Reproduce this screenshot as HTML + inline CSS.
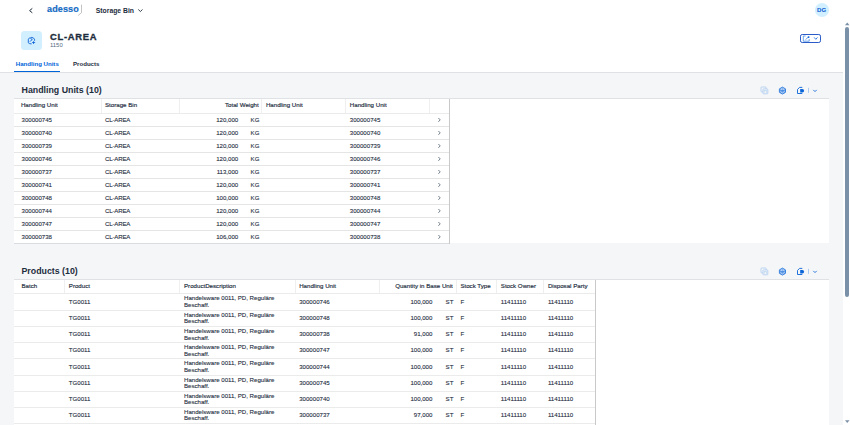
<!DOCTYPE html>
<html><head><meta charset="utf-8"><style>
*{margin:0;padding:0;box-sizing:border-box}
html,body{width:850px;height:425px;overflow:hidden;background:#f5f6f7;font-family:"Liberation Sans",sans-serif;color:#1d2d3e}
.a{position:absolute;white-space:nowrap}
#hdr{position:absolute;left:0;top:0;width:843px;height:73px;background:#fff;border-bottom:1px solid #dfe1e4}
#sb{position:absolute;left:843px;top:0;width:7px;height:425px;background:#fff}
.thumb{position:absolute;left:845px;width:4px;background:#7b91a8;border-radius:2px}
.tbl{position:absolute;left:14px;width:815px;background:#fff}
.th{font-weight:normal;font-size:6.15px;color:#1d2d3e;-webkit-text-stroke:0.16px #1d2d3e}
.td{font-size:6.1px;color:#1d2d3e;-webkit-text-stroke:0.1px #1d2d3e}
.hl{position:absolute;height:1px;background:#ebebeb}
.vl{position:absolute;width:1px;background:#efefef}
.ttl{font-weight:bold;font-size:8.8px;color:#1d2d3e}
</style></head><body>
<div id="hdr"></div>
<svg class="a" style="left:27px;top:7px" width="8" height="8" viewBox="27 7 8 8"><path d="M32.3 8.4 L29.6 10.6 L32.3 12.8" fill="none" stroke="#1d2d3e" stroke-width="1"/></svg>
<div class="a " style="left:47.0px;top:3.5px;font-weight:bold;font-size:9px;color:#156cc4;letter-spacing:0.15px;-webkit-text-stroke:0.2px #156cc4">adesso</div>
<svg class="a" style="left:77px;top:4px" width="6" height="12" viewBox="0 0 6 12"><path d="M4.5 0.6 L4.5 8.7 L1.2 11.5" fill="none" stroke="#9a9a9a" stroke-width="0.6"/></svg>
<div class="a " style="left:95.8px;top:7.2px;font-weight:bold;font-size:6.8px;color:#1d2d3e">Storage Bin</div>
<svg class="a" style="left:137px;top:8px" width="7" height="5" viewBox="137 8 7 5"><path d="M138.3 9.5 L140.4 11.5 L142.5 9.5" fill="none" stroke="#1d2d3e" stroke-width="0.9"/></svg>
<div class="a" style="left:814.7px;top:3.2px;width:14px;height:13.6px;border-radius:50%;background:#d1efff"></div>
<div class="a " style="left:816.9px;top:6.4px;font-weight:bold;font-size:6.1px;letter-spacing:0.15px;color:#0a58d0">DG</div>
<div class="a" style="left:21px;top:31px;width:21px;height:19px;border-radius:3.5px;background:#d1efff"></div>
<svg class="a" style="left:26px;top:35px" width="12" height="11" viewBox="26 35 12 11"><path d="M30.6 37.8 L29.2 38.2 Q28.3 38.6 28.3 39.6 L28.3 42.4 Q28.4 43.4 29.6 43.6 L31.6 43.9" fill="none" stroke="#0a5fd6" stroke-width="0.9"/><path d="M30.2 38.4 L31.8 37.3 L33.8 38.3 Q34.6 38.8 34.6 39.8 L34.6 40.8" fill="none" stroke="#0a5fd6" stroke-width="0.9"/><path d="M29.6 41.6 L32.6 39.6 M31.6 38.3 L31.6 40" fill="none" stroke="#0a5fd6" stroke-width="0.7"/><path d="M33.6 40.9 Q33.9 42.3 35.6 42.6 Q33.9 42.9 33.6 44.3 Q33.3 42.9 31.6 42.6 Q33.3 42.3 33.6 40.9 Z" fill="#0a5fd6"/></svg>
<div class="a " style="left:50.0px;top:31.2px;font-weight:bold;font-size:9.4px;letter-spacing:0.72px;color:#1d2d3e;-webkit-text-stroke:0.35px #1d2d3e">CL-AREA</div>
<div class="a " style="left:50px;top:42.3px;font-size:5.9px;color:#556b82">1150</div>
<div class="a" style="left:800.1px;top:33.8px;width:20.9px;height:9.1px;border:0.9px solid #2a5bc7;border-radius:2.2px;background:#fff"></div>
<svg class="a" style="left:802px;top:34.5px" width="9" height="7" viewBox="802 34.5 9 7"><path d="M805.6 35.5 L803.3 35.5 L803.3 40.7 L809.2 40.7 L809.2 38.6" fill="none" stroke="#3b86e6" stroke-width="0.75"/><path d="M805.4 39.3 L808.3 36.6" stroke="#3b86e6" stroke-width="0.75"/><circle cx="808.6" cy="36.6" r="0.95" fill="#0a5fd6"/></svg>
<svg class="a" style="left:813px;top:36px" width="6" height="5" viewBox="813 36 6 5"><path d="M814.1 37.4 L815.8 39.3 L817.5 37.4" fill="none" stroke="#2f78de" stroke-width="0.95"/></svg>
<div class="a " style="left:15.8px;top:59.7px;font-weight:bold;font-size:6.1px;color:#0064d9">Handling Units</div>
<div class="a " style="left:73px;top:59.7px;font-weight:bold;font-size:6.1px;color:#1d2d3e">Products</div>
<div class="a" style="left:14px;top:70.8px;width:46px;height:1.2px;background:#0064d9"></div>
<div id="sb"></div>
<svg class="a" style="left:844.5px;top:22px" width="5" height="3.5" viewBox="0 0 5 3.5"><path d="M0 3.2 L2.25 0.4 L4.5 3.2 Z" fill="#7b91a8"/></svg>
<div class="thumb" style="top:27.4px;height:270px"></div>
<svg class="a" style="left:844.5px;top:420px" width="5" height="3.5" viewBox="0 0 5 3.5"><path d="M0 0.3 L2.25 3.1 L4.5 0.3 Z" fill="#7b91a8"/></svg>
<div class="a ttl" style="left:21.6px;top:84.6px;">Handling Units (10)</div>
<svg class="a" style="left:758px;top:84.0px" width="32" height="12" viewBox="758 84 32 12"><path d="M766.1 88.7 L766.1 87.6 Q766.1 87 765.5 87 L761.6 87 Q761 87 761 87.6 L761 91.3 Q761 91.9 761.6 91.9 L762.7 91.9" fill="none" stroke="#9cc2f0" stroke-width="0.65"/><rect x="762.9" y="88.9" width="4.9" height="4.9" rx="0.7" fill="#f5f6f7" stroke="#9cc2f0" stroke-width="0.65"/><path d="M764.2 92.8 L764.2 90.4 L766.4 90.4 L766.4 92.8" fill="none" stroke="#a6c9f2" stroke-width="0.6"/><path d="M782.45 87.1 L785.5 88.85 L785.5 92.35 L782.45 94.1 L779.4 92.35 L779.4 88.85 Z" fill="#d4e5fb" stroke="#0a64d8" stroke-width="0.75"/><path d="M779.9 89.6 L785 92.6 M785 89.6 L779.9 92.6 M782.45 87.5 L782.45 93.7 M780.9 88 L780.9 93.1 M784 88 L784 93.1 M779.6 90.6 L785.3 90.6" stroke="#1a6fdc" stroke-width="0.42"/></svg>
<svg class="a" style="left:795px;top:84.0px" width="28" height="12" viewBox="795 84 28 12"><path d="M802.3 87.4 L799.6 87.4 L797.5 89.4 L797.5 93.5 L802.3 93.5" fill="none" stroke="#0a64d8" stroke-width="0.9"/><path d="M800.2 88.9 L802.4 88.9 Q804.1 88.9 804.1 90.7 Q804.1 92.5 802.4 92.5 L800.2 92.5 Z" fill="#0a64d8"/><rect x="808.05" y="87.8" width="0.55" height="5.1" fill="#6ea6ec"/><path d="M813.3 89.9 L815 91.6 L816.7 89.9" fill="none" stroke="#0a64d8" stroke-width="0.85"/></svg>
<div class="tbl" style="top:98.2px;height:145.1px;border-top:1px solid #dfe1e4;"></div>
<div class="hl" style="left:14px;top:112.8px;width:435.4px"></div>
<div class="hl" style="left:14px;top:125.8px;width:435.4px;background:#e5e5e5"></div>
<div class="hl" style="left:14px;top:138.8px;width:435.4px;background:#e5e5e5"></div>
<div class="hl" style="left:14px;top:151.8px;width:435.4px;background:#e5e5e5"></div>
<div class="hl" style="left:14px;top:164.8px;width:435.4px;background:#e5e5e5"></div>
<div class="hl" style="left:14px;top:177.8px;width:435.4px;background:#e5e5e5"></div>
<div class="hl" style="left:14px;top:190.8px;width:435.4px;background:#e5e5e5"></div>
<div class="hl" style="left:14px;top:203.8px;width:435.4px;background:#e5e5e5"></div>
<div class="hl" style="left:14px;top:216.8px;width:435.4px;background:#e5e5e5"></div>
<div class="hl" style="left:14px;top:229.8px;width:435.4px;background:#e5e5e5"></div>
<div class="hl" style="left:14px;top:242.8px;width:435.4px;background:#d9dde2"></div>
<div class="vl" style="left:100.9px;top:99.2px;height:14.1px"></div>
<div class="vl" style="left:179.1px;top:99.2px;height:14.1px"></div>
<div class="vl" style="left:260.7px;top:99.2px;height:14.1px"></div>
<div class="vl" style="left:345.1px;top:99.2px;height:14.1px"></div>
<div class="vl" style="left:428.9px;top:99.2px;height:14.1px"></div>
<div class="vl" style="left:448.9px;top:99.2px;height:145.1px;background:#c9c9c9"></div>
<div class="a th" style="left:20.9px;top:101.3px;">Handling Unit</div>
<div class="a th" style="left:105px;top:101.3px;">Storage Bin</div>
<div class="a th" style="right:591.3px;top:101.3px">Total Weight</div>
<div class="a th" style="left:265.9px;top:101.3px;">Handling Unit</div>
<div class="a th" style="left:349.8px;top:101.3px;">Handling Unit</div>
<div class="a td" style="left:21.5px;top:116.2px;">300000745</div>
<div class="a td" style="left:105px;top:116.2px;letter-spacing:-0.17px">CL-AREA</div>
<div class="a td" style="right:611.8px;top:116.2px">120,000</div>
<div class="a td" style="left:250.6px;top:116.2px;">KG</div>
<div class="a td" style="left:349.8px;top:116.2px;">300000745</div>
<svg class="a" style="left:437px;top:117.40px" width="5" height="6" viewBox="0 0 5 6"><path d="M1.4 1.0 L3.2 2.9 L1.4 4.8" fill="none" stroke="#33475b" stroke-width="0.7"/></svg>
<div class="a td" style="left:21.5px;top:129.2px;">300000740</div>
<div class="a td" style="left:105px;top:129.2px;letter-spacing:-0.17px">CL-AREA</div>
<div class="a td" style="right:611.8px;top:129.2px">120,000</div>
<div class="a td" style="left:250.6px;top:129.2px;">KG</div>
<div class="a td" style="left:349.8px;top:129.2px;">300000740</div>
<svg class="a" style="left:437px;top:130.40px" width="5" height="6" viewBox="0 0 5 6"><path d="M1.4 1.0 L3.2 2.9 L1.4 4.8" fill="none" stroke="#33475b" stroke-width="0.7"/></svg>
<div class="a td" style="left:21.5px;top:142.20000000000002px;">300000739</div>
<div class="a td" style="left:105px;top:142.20000000000002px;letter-spacing:-0.17px">CL-AREA</div>
<div class="a td" style="right:611.8px;top:142.20000000000002px">120,000</div>
<div class="a td" style="left:250.6px;top:142.20000000000002px;">KG</div>
<div class="a td" style="left:349.8px;top:142.20000000000002px;">300000739</div>
<svg class="a" style="left:437px;top:143.40px" width="5" height="6" viewBox="0 0 5 6"><path d="M1.4 1.0 L3.2 2.9 L1.4 4.8" fill="none" stroke="#33475b" stroke-width="0.7"/></svg>
<div class="a td" style="left:21.5px;top:155.20000000000002px;">300000746</div>
<div class="a td" style="left:105px;top:155.20000000000002px;letter-spacing:-0.17px">CL-AREA</div>
<div class="a td" style="right:611.8px;top:155.20000000000002px">120,000</div>
<div class="a td" style="left:250.6px;top:155.20000000000002px;">KG</div>
<div class="a td" style="left:349.8px;top:155.20000000000002px;">300000746</div>
<svg class="a" style="left:437px;top:156.40px" width="5" height="6" viewBox="0 0 5 6"><path d="M1.4 1.0 L3.2 2.9 L1.4 4.8" fill="none" stroke="#33475b" stroke-width="0.7"/></svg>
<div class="a td" style="left:21.5px;top:168.20000000000002px;">300000737</div>
<div class="a td" style="left:105px;top:168.20000000000002px;letter-spacing:-0.17px">CL-AREA</div>
<div class="a td" style="right:611.8px;top:168.20000000000002px">113,000</div>
<div class="a td" style="left:250.6px;top:168.20000000000002px;">KG</div>
<div class="a td" style="left:349.8px;top:168.20000000000002px;">300000737</div>
<svg class="a" style="left:437px;top:169.40px" width="5" height="6" viewBox="0 0 5 6"><path d="M1.4 1.0 L3.2 2.9 L1.4 4.8" fill="none" stroke="#33475b" stroke-width="0.7"/></svg>
<div class="a td" style="left:21.5px;top:181.20000000000002px;">300000741</div>
<div class="a td" style="left:105px;top:181.20000000000002px;letter-spacing:-0.17px">CL-AREA</div>
<div class="a td" style="right:611.8px;top:181.20000000000002px">120,000</div>
<div class="a td" style="left:250.6px;top:181.20000000000002px;">KG</div>
<div class="a td" style="left:349.8px;top:181.20000000000002px;">300000741</div>
<svg class="a" style="left:437px;top:182.40px" width="5" height="6" viewBox="0 0 5 6"><path d="M1.4 1.0 L3.2 2.9 L1.4 4.8" fill="none" stroke="#33475b" stroke-width="0.7"/></svg>
<div class="a td" style="left:21.5px;top:194.20000000000002px;">300000748</div>
<div class="a td" style="left:105px;top:194.20000000000002px;letter-spacing:-0.17px">CL-AREA</div>
<div class="a td" style="right:611.8px;top:194.20000000000002px">100,000</div>
<div class="a td" style="left:250.6px;top:194.20000000000002px;">KG</div>
<div class="a td" style="left:349.8px;top:194.20000000000002px;">300000748</div>
<svg class="a" style="left:437px;top:195.40px" width="5" height="6" viewBox="0 0 5 6"><path d="M1.4 1.0 L3.2 2.9 L1.4 4.8" fill="none" stroke="#33475b" stroke-width="0.7"/></svg>
<div class="a td" style="left:21.5px;top:207.20000000000002px;">300000744</div>
<div class="a td" style="left:105px;top:207.20000000000002px;letter-spacing:-0.17px">CL-AREA</div>
<div class="a td" style="right:611.8px;top:207.20000000000002px">120,000</div>
<div class="a td" style="left:250.6px;top:207.20000000000002px;">KG</div>
<div class="a td" style="left:349.8px;top:207.20000000000002px;">300000744</div>
<svg class="a" style="left:437px;top:208.40px" width="5" height="6" viewBox="0 0 5 6"><path d="M1.4 1.0 L3.2 2.9 L1.4 4.8" fill="none" stroke="#33475b" stroke-width="0.7"/></svg>
<div class="a td" style="left:21.5px;top:220.20000000000002px;">300000747</div>
<div class="a td" style="left:105px;top:220.20000000000002px;letter-spacing:-0.17px">CL-AREA</div>
<div class="a td" style="right:611.8px;top:220.20000000000002px">120,000</div>
<div class="a td" style="left:250.6px;top:220.20000000000002px;">KG</div>
<div class="a td" style="left:349.8px;top:220.20000000000002px;">300000747</div>
<svg class="a" style="left:437px;top:221.40px" width="5" height="6" viewBox="0 0 5 6"><path d="M1.4 1.0 L3.2 2.9 L1.4 4.8" fill="none" stroke="#33475b" stroke-width="0.7"/></svg>
<div class="a td" style="left:21.5px;top:233.20000000000002px;">300000738</div>
<div class="a td" style="left:105px;top:233.20000000000002px;letter-spacing:-0.17px">CL-AREA</div>
<div class="a td" style="right:611.8px;top:233.20000000000002px">106,000</div>
<div class="a td" style="left:250.6px;top:233.20000000000002px;">KG</div>
<div class="a td" style="left:349.8px;top:233.20000000000002px;">300000738</div>
<svg class="a" style="left:437px;top:234.40px" width="5" height="6" viewBox="0 0 5 6"><path d="M1.4 1.0 L3.2 2.9 L1.4 4.8" fill="none" stroke="#33475b" stroke-width="0.7"/></svg>
<div class="a ttl" style="left:21.5px;top:265.6px;">Products (10)</div>
<svg class="a" style="left:758px;top:265.0px" width="32" height="12" viewBox="758 84 32 12"><path d="M766.1 88.7 L766.1 87.6 Q766.1 87 765.5 87 L761.6 87 Q761 87 761 87.6 L761 91.3 Q761 91.9 761.6 91.9 L762.7 91.9" fill="none" stroke="#9cc2f0" stroke-width="0.65"/><rect x="762.9" y="88.9" width="4.9" height="4.9" rx="0.7" fill="#f5f6f7" stroke="#9cc2f0" stroke-width="0.65"/><path d="M764.2 92.8 L764.2 90.4 L766.4 90.4 L766.4 92.8" fill="none" stroke="#a6c9f2" stroke-width="0.6"/><path d="M782.45 87.1 L785.5 88.85 L785.5 92.35 L782.45 94.1 L779.4 92.35 L779.4 88.85 Z" fill="#d4e5fb" stroke="#0a64d8" stroke-width="0.75"/><path d="M779.9 89.6 L785 92.6 M785 89.6 L779.9 92.6 M782.45 87.5 L782.45 93.7 M780.9 88 L780.9 93.1 M784 88 L784 93.1 M779.6 90.6 L785.3 90.6" stroke="#1a6fdc" stroke-width="0.42"/></svg>
<svg class="a" style="left:795px;top:265.0px" width="28" height="12" viewBox="795 84 28 12"><path d="M802.3 87.4 L799.6 87.4 L797.5 89.4 L797.5 93.5 L802.3 93.5" fill="none" stroke="#0a64d8" stroke-width="0.9"/><path d="M800.2 88.9 L802.4 88.9 Q804.1 88.9 804.1 90.7 Q804.1 92.5 802.4 92.5 L800.2 92.5 Z" fill="#0a64d8"/><rect x="808.05" y="87.8" width="0.55" height="5.1" fill="#6ea6ec"/><path d="M813.3 89.9 L815 91.6 L816.7 89.9" fill="none" stroke="#0a64d8" stroke-width="0.85"/></svg>
<div class="tbl" style="top:279.4px;height:150.60000000000002px;border-top:1px solid #dfe1e4;"></div>
<div class="hl" style="left:14px;top:293.0px;width:581.3px"></div>
<div class="hl" style="left:14px;top:309.90px;width:581.3px"></div>
<div class="hl" style="left:14px;top:326.05px;width:581.3px"></div>
<div class="hl" style="left:14px;top:342.20px;width:581.3px"></div>
<div class="hl" style="left:14px;top:358.35px;width:581.3px"></div>
<div class="hl" style="left:14px;top:374.50px;width:581.3px"></div>
<div class="hl" style="left:14px;top:390.65px;width:581.3px"></div>
<div class="hl" style="left:14px;top:406.80px;width:581.3px"></div>
<div class="hl" style="left:14px;top:422.95px;width:581.3px"></div>
<div class="vl" style="left:63.599999999999994px;top:280.4px;height:13.1px"></div>
<div class="vl" style="left:178.9px;top:280.4px;height:13.1px"></div>
<div class="vl" style="left:294.8px;top:280.4px;height:13.1px"></div>
<div class="vl" style="left:378.9px;top:280.4px;height:13.1px"></div>
<div class="vl" style="left:456.1px;top:280.4px;height:13.1px"></div>
<div class="vl" style="left:496.3px;top:280.4px;height:13.1px"></div>
<div class="vl" style="left:542.8px;top:280.4px;height:13.1px"></div>
<div class="vl" style="left:594.8px;top:280.4px;height:145.60000000000002px;background:#c9c9c9"></div>
<div class="a th" style="left:21.5px;top:282.29999999999995px;">Batch</div>
<div class="a th" style="left:68.8px;top:282.29999999999995px;">Product</div>
<div class="a th" style="left:184px;top:282.29999999999995px;">ProductDescription</div>
<div class="a th" style="left:299.2px;top:282.29999999999995px;">Handling Unit</div>
<div class="a th" style="right:397.2px;top:282.29999999999995px">Quantity in Base Unit</div>
<div class="a th" style="left:460.4px;top:282.29999999999995px;">Stock Type</div>
<div class="a th" style="left:500.8px;top:282.29999999999995px;">Stock Owner</div>
<div class="a th" style="left:547.9px;top:282.29999999999995px;">Disposal Party</div>
<div class="a td" style="left:68.8px;top:297.65px;">TG0011</div>
<div class="a td" style="left:184px;top:295.45px;line-height:6.4px">Handelsware 0011, PD, Reguläre<br>Beschaff.</div>
<div class="a td" style="left:299.2px;top:297.65px;">300000746</div>
<div class="a td" style="right:417.6px;top:297.65px">100,000</div>
<div class="a td" style="left:445.6px;top:297.65px;">ST</div>
<div class="a td" style="left:460.4px;top:297.65px;">F</div>
<div class="a td" style="left:500.8px;top:297.65px;">11411110</div>
<div class="a td" style="left:547.9px;top:297.65px;">11411110</div>
<div class="a td" style="left:68.8px;top:314.17px;">TG0011</div>
<div class="a td" style="left:184px;top:311.97px;line-height:6.4px">Handelsware 0011, PD, Reguläre<br>Beschaff.</div>
<div class="a td" style="left:299.2px;top:314.17px;">300000748</div>
<div class="a td" style="right:417.6px;top:314.17px">100,000</div>
<div class="a td" style="left:445.6px;top:314.17px;">ST</div>
<div class="a td" style="left:460.4px;top:314.17px;">F</div>
<div class="a td" style="left:500.8px;top:314.17px;">11411110</div>
<div class="a td" style="left:547.9px;top:314.17px;">11411110</div>
<div class="a td" style="left:68.8px;top:330.32px;">TG0011</div>
<div class="a td" style="left:184px;top:328.12px;line-height:6.4px">Handelsware 0011, PD, Reguläre<br>Beschaff.</div>
<div class="a td" style="left:299.2px;top:330.32px;">300000738</div>
<div class="a td" style="right:417.6px;top:330.32px">91,000</div>
<div class="a td" style="left:445.6px;top:330.32px;">ST</div>
<div class="a td" style="left:460.4px;top:330.32px;">F</div>
<div class="a td" style="left:500.8px;top:330.32px;">11411110</div>
<div class="a td" style="left:547.9px;top:330.32px;">11411110</div>
<div class="a td" style="left:68.8px;top:346.47px;">TG0011</div>
<div class="a td" style="left:184px;top:344.27px;line-height:6.4px">Handelsware 0011, PD, Reguläre<br>Beschaff.</div>
<div class="a td" style="left:299.2px;top:346.47px;">300000747</div>
<div class="a td" style="right:417.6px;top:346.47px">100,000</div>
<div class="a td" style="left:445.6px;top:346.47px;">ST</div>
<div class="a td" style="left:460.4px;top:346.47px;">F</div>
<div class="a td" style="left:500.8px;top:346.47px;">11411110</div>
<div class="a td" style="left:547.9px;top:346.47px;">11411110</div>
<div class="a td" style="left:68.8px;top:362.62px;">TG0011</div>
<div class="a td" style="left:184px;top:360.42px;line-height:6.4px">Handelsware 0011, PD, Reguläre<br>Beschaff.</div>
<div class="a td" style="left:299.2px;top:362.62px;">300000744</div>
<div class="a td" style="right:417.6px;top:362.62px">100,000</div>
<div class="a td" style="left:445.6px;top:362.62px;">ST</div>
<div class="a td" style="left:460.4px;top:362.62px;">F</div>
<div class="a td" style="left:500.8px;top:362.62px;">11411110</div>
<div class="a td" style="left:547.9px;top:362.62px;">11411110</div>
<div class="a td" style="left:68.8px;top:378.77px;">TG0011</div>
<div class="a td" style="left:184px;top:376.57px;line-height:6.4px">Handelsware 0011, PD, Reguläre<br>Beschaff.</div>
<div class="a td" style="left:299.2px;top:378.77px;">300000745</div>
<div class="a td" style="right:417.6px;top:378.77px">100,000</div>
<div class="a td" style="left:445.6px;top:378.77px;">ST</div>
<div class="a td" style="left:460.4px;top:378.77px;">F</div>
<div class="a td" style="left:500.8px;top:378.77px;">11411110</div>
<div class="a td" style="left:547.9px;top:378.77px;">11411110</div>
<div class="a td" style="left:68.8px;top:394.92px;">TG0011</div>
<div class="a td" style="left:184px;top:392.72px;line-height:6.4px">Handelsware 0011, PD, Reguläre<br>Beschaff.</div>
<div class="a td" style="left:299.2px;top:394.92px;">300000740</div>
<div class="a td" style="right:417.6px;top:394.92px">100,000</div>
<div class="a td" style="left:445.6px;top:394.92px;">ST</div>
<div class="a td" style="left:460.4px;top:394.92px;">F</div>
<div class="a td" style="left:500.8px;top:394.92px;">11411110</div>
<div class="a td" style="left:547.9px;top:394.92px;">11411110</div>
<div class="a td" style="left:68.8px;top:411.07px;">TG0011</div>
<div class="a td" style="left:184px;top:408.87px;line-height:6.4px">Handelsware 0011, PD, Reguläre<br>Beschaff.</div>
<div class="a td" style="left:299.2px;top:411.07px;">300000737</div>
<div class="a td" style="right:417.6px;top:411.07px">97,000</div>
<div class="a td" style="left:445.6px;top:411.07px;">ST</div>
<div class="a td" style="left:460.4px;top:411.07px;">F</div>
<div class="a td" style="left:500.8px;top:411.07px;">11411110</div>
<div class="a td" style="left:547.9px;top:411.07px;">11411110</div>
</body></html>
